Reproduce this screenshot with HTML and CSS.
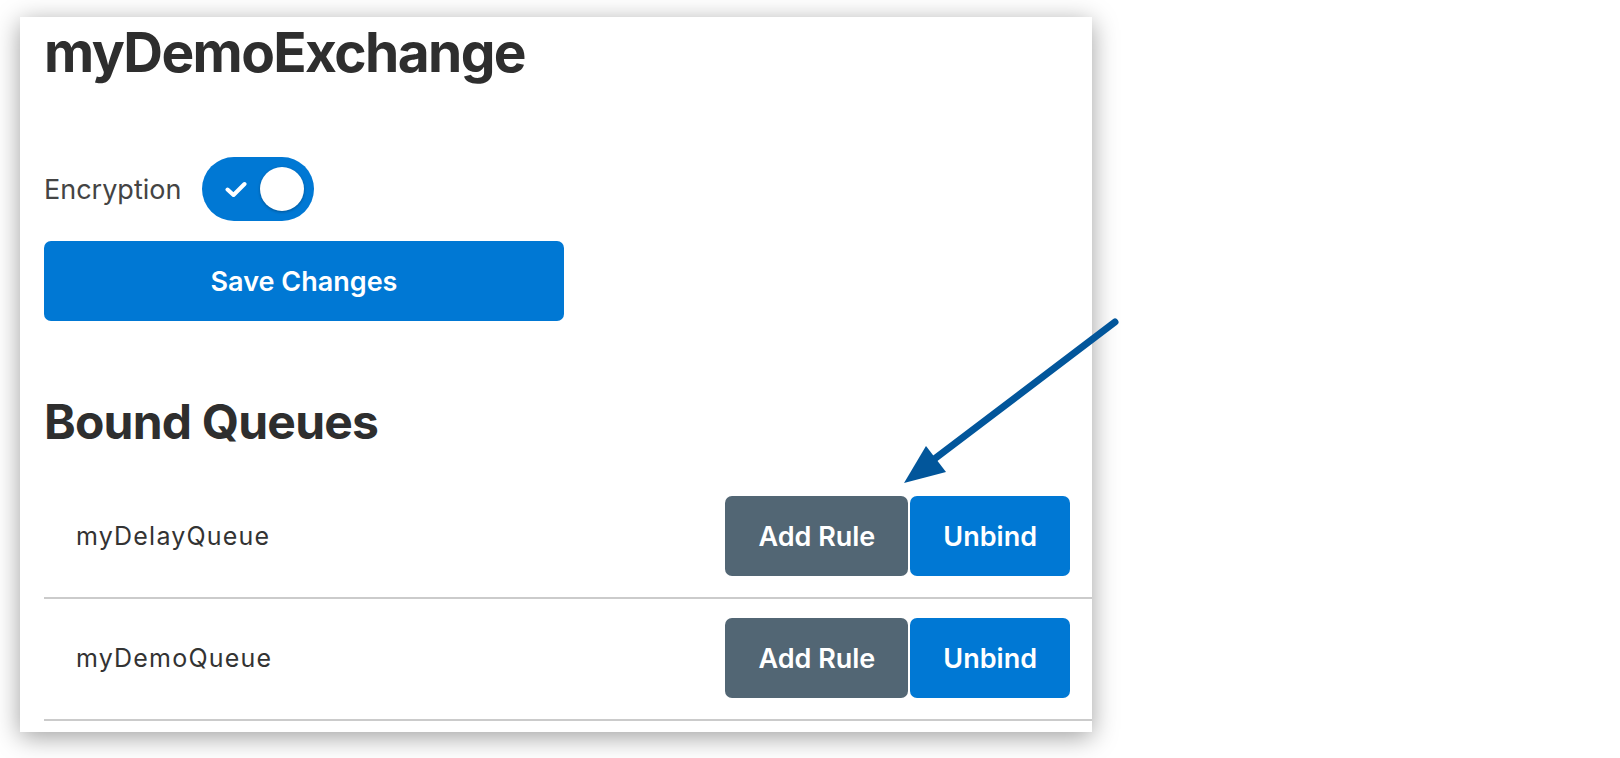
FILE: index.html
```html
<!DOCTYPE html>
<html>
<head>
  <title>myDemoExchange</title>
  <link rel="stylesheet" href="styles.css">
</head>
<body>
  <div class="page">
    <div class="card">
      <h1 class="title">myDemoExchange</h1>
      <div class="setting">
        <span class="setting-label">Encryption</span>
        <label class="toggle">
          <input type="checkbox" checked>
          <span class="toggle-track">
            <svg class="toggle-check" width="22" height="17" viewBox="0 0 22 17">
              <path d="M2.5 8.5 L8.5 14 L19.5 3" fill="none" stroke="#fff" stroke-width="4" stroke-linecap="round" stroke-linejoin="round"/>
            </svg>
            <span class="toggle-knob"></span>
          </span>
        </label>
      </div>
      <button class="btn btn-primary btn-save" type="button">Save Changes</button>

      <h2 class="section-title">Bound Queues</h2>
      <ul class="queue-list">
        <li class="queue-row">
          <span class="queue-name">myDelayQueue</span>
          <div class="queue-actions">
            <button class="btn btn-secondary" type="button">Add Rule</button>
            <button class="btn btn-primary" type="button">Unbind</button>
          </div>
        </li>
        <li class="queue-row">
          <span class="queue-name">myDemoQueue</span>
          <div class="queue-actions">
            <button class="btn btn-secondary" type="button">Add Rule</button>
            <button class="btn btn-primary" type="button">Unbind</button>
          </div>
        </li>
      </ul>
    </div>
  </div>

  <!-- callout arrow pointing at the Add Rule button -->
  <svg class="callout" width="1620" height="758" viewBox="0 0 1620 758">
    <line x1="1115" y1="322" x2="933" y2="460" stroke="#02569b" stroke-width="7" stroke-linecap="round"/>
    <polygon points="904,483 926,446 946,472" fill="#02569b"/>
  </svg>
</body>
</html>
```

FILE: styles.css
```css
body {
  margin: 0;
  padding: 0;
  background-color: #fff;
  font-family: Inter, Roboto, "Liberation Sans", Arial, sans-serif;
  color: #333;
  position: relative;
  height: 758px;
  overflow: hidden;
}
.page {
  padding: 17px 0 0 20px;
}
.card {
  width: 1072px;
  height: 715px;
  box-sizing: border-box;
  padding: 0 0 0 24px;
  background-color: #fff;
  box-shadow: 0 5px 24px rgba(0, 0, 0, 0.38);
  overflow: hidden;
}
.title {
  margin: 2px 0 0;
  font-size: 55px;
  line-height: 67px;
  font-weight: bold;
  letter-spacing: -1.6px;
  color: #2e2e2e;
}
.setting {
  display: flex;
  align-items: center;
  gap: 21px;
  margin-top: 71px;
}
.setting-label {
  font-size: 27px;
  color: #444;
}
.toggle {
  display: inline-block;
  cursor: pointer;
}
.toggle input {
  display: none;
}
.toggle-track {
  display: flex;
  align-items: center;
  justify-content: space-between;
  box-sizing: border-box;
  width: 112px;
  height: 64px;
  padding: 0 10px 0 23px;
  border-radius: 32px;
  background-color: #0078d4;
}
.toggle-knob {
  width: 44px;
  height: 44px;
  border-radius: 50%;
  background-color: #fff;
  box-shadow: 0 1px 3px rgba(0, 0, 0, 0.3);
}
.btn {
  border: none;
  border-radius: 7px;
  color: #fff;
  font-family: inherit;
  font-weight: 600;
  font-size: 27px;
  height: 80px;
  padding: 0 33px;
  cursor: pointer;
}
.btn-primary {
  background-color: #0078d4;
}
.btn-secondary {
  background-color: #526674;
}
.btn-save {
  display: block;
  width: 520px;
  margin-top: 20px;
  font-size: 27px;
}
.section-title {
  margin: 71px 0 0;
  font-size: 48px;
  line-height: 59px;
  font-weight: bold;
  letter-spacing: -0.8px;
  color: #2e2e2e;
}
.queue-list {
  list-style: none;
  margin: 26px 0 0;
  padding: 0;
}
.queue-row {
  display: flex;
  align-items: center;
  justify-content: space-between;
  padding: 19px 22px 21px 32px;
  border-bottom: 2px solid #cbcbcb;
}
.queue-name {
  font-size: 25px;
  letter-spacing: 1.2px;
  color: #333;
}
.queue-actions {
  display: flex;
  gap: 2px;
}
.callout {
  position: absolute;
  left: 0;
  top: 0;
  pointer-events: none;
}
```
